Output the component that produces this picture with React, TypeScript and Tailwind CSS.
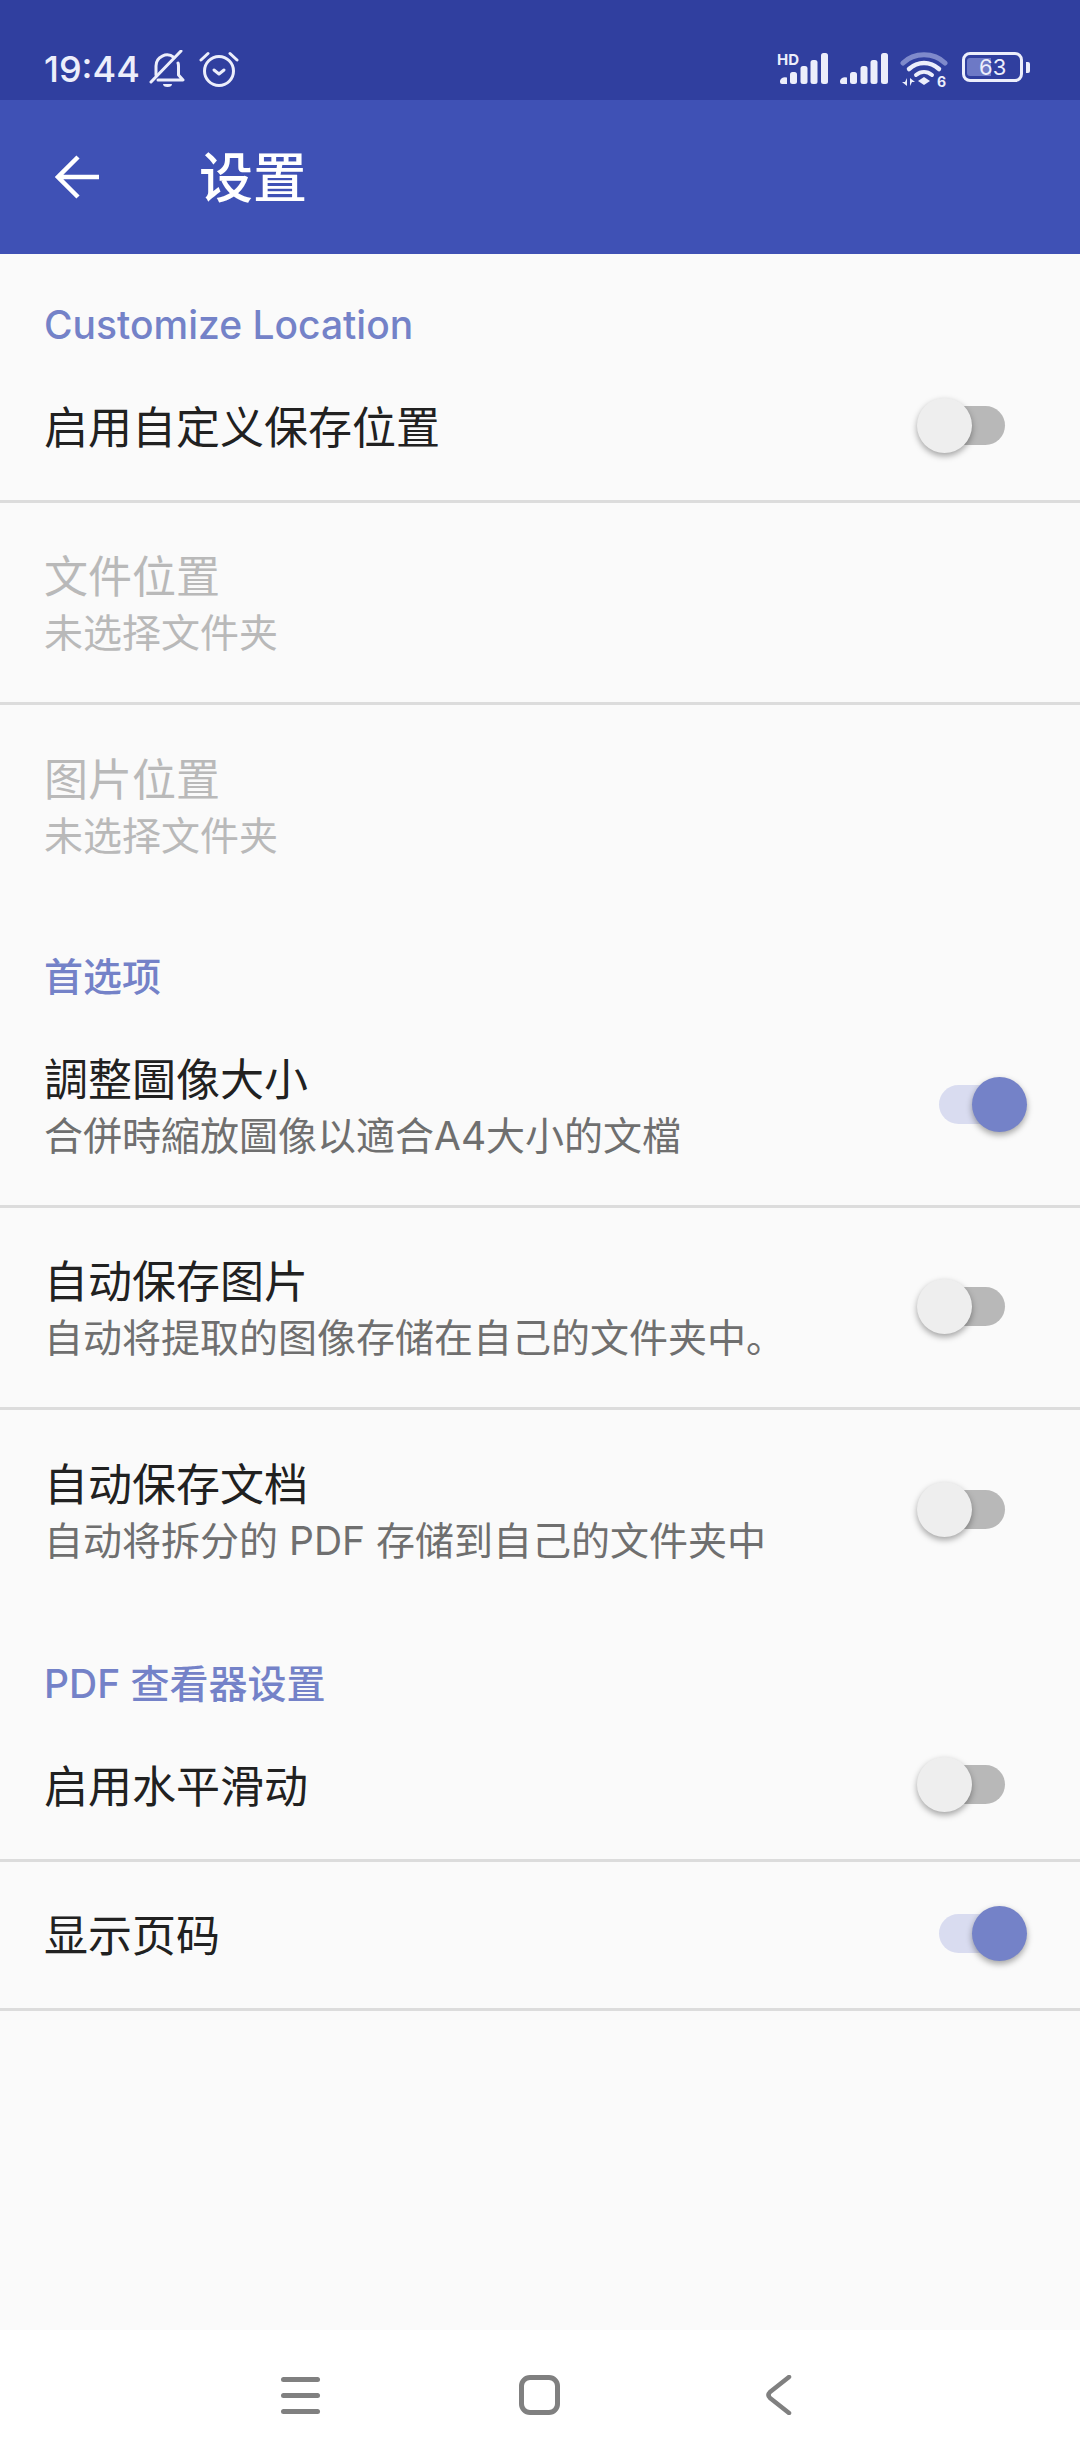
const font = "font-['Inter','Noto_Sans_CJK_SC',sans-serif]";

function Signal({ hd }: { hd?: boolean }) {
  return (
    <svg width="52" height="35" viewBox="-4 -4 52 35" className="-ml-[4px] -mt-[4px] block">
      {hd && (
        <text x="-3" y="12" fontSize="15" fontWeight="700" fill="#eceefb" fontFamily="Inter">
          HD
        </text>
      )}
      <g fill="#eceefb">
        <path d="M0 29v-1.500a6 6 0 0 1 7-3V31H2a2 2 0 0 1-2-2z" />
        <rect x="10" y="19" width="7" height="12" rx="2.500" />
        <rect x="20.500" y="13" width="7" height="18" rx="2.500" />
        <rect x="30.500" y="7" width="7" height="24" rx="2.500" />
        <rect x="41" y="0" width="7" height="31" rx="2.500" />
      </g>
    </svg>
  );
}

function StatusBar() {
  return (
    <div className="flex h-[100px] items-start justify-between bg-[#303f9f] pl-[44px] pr-[50px] pt-[50px] text-[#eceefb]">
      <div className="flex items-center">
        <span className="text-[36px] font-medium leading-[36px]">19:44</span>
        <svg width="36" height="38" viewBox="0 0 36 38" fill="none" stroke="#eceefb" strokeWidth="3" className="ml-[9px]">
          <path d="M7 25V16a11 11 0 0 1 18-8.500" strokeLinecap="round" />
          <path d="M29 13c.5 1 .5 2 .5 3v9l4.500 5H9" strokeLinecap="round" strokeLinejoin="round" />
          <path d="M2 32 32 1" strokeLinecap="round" />
          <path d="M14 34h9a4.500 3 0 0 1-9 0z" fill="#eceefb" stroke="none" />
        </svg>
        <svg width="40" height="38" viewBox="0 0 40 38" fill="none" stroke="#eceefb" strokeWidth="3" strokeLinecap="round" strokeLinejoin="round" className="ml-[14px]">
          <circle cx="20" cy="21" r="14.500" />
          <path d="M2 10 9 3.500M38 10 31 3.500" />
          <path d="M15 20l5 4 5-4" />
        </svg>
      </div>
      <div className="flex items-start pt-[2px]">
        <div className="mt-[1px]">
          <Signal hd />
        </div>
        <div className="ml-[12px] mt-[1px]">
          <Signal />
        </div>
        <svg width="48" height="38" viewBox="0 0 48 38" fill="none" strokeLinecap="round" className="ml-[12px]">
          <path d="M3 11C14 0 34 0 45 11" stroke="#7f8acb" strokeWidth="5" />
          <path d="M9 17c9-8 21-8 30 0" stroke="#eceefb" strokeWidth="4.500" />
          <path d="M16 23c5-4 11-4 16 0" stroke="#eceefb" strokeWidth="4" />
          <path d="M18 29l6-4 6 4-6 4z" fill="#eceefb" />
          <path d="M7 26v8l-5-4h3zM10 34v-8l5 4h-3z" fill="#eceefb" />
          <text x="37" y="35" fontSize="14" fontWeight="700" fill="#eceefb" fontFamily="Inter">
            6
          </text>
        </svg>
        <div className="ml-[14px] flex items-center">
          <div className="flex h-[30px] w-[61px] items-stretch rounded-[8px] border-[3px] border-[#eceefb] px-[2px] py-[3px]">
            <div className="relative w-[24px] rounded-l-[3px] bg-[#6d79c6]">
              <span className="absolute left-[12px] top-[-3px] text-[22px] leading-[24px] text-[#eceefb]">63</span>
            </div>
          </div>
          <div className="ml-[3px] h-[11px] w-[4px] rounded-r-[2px] bg-[#eceefb]"></div>
        </div>
      </div>
    </div>
  );
}

function AppBar() {
  return (
    <div className="flex h-[154px] items-center bg-[#3f51b5] pl-[55px]">
      <svg width="44" height="44" viewBox="0 0 44 44" fill="none" stroke="#fff" strokeWidth="4.500" className="block">
        <path d="M44 22H3M23 2 3 22l20 20" />
      </svg>
      <div className="ml-[100px] mt-[4px] text-[54px] font-medium leading-none text-white">设置</div>
    </div>
  );
}

function Switch({ on }: { on?: boolean }) {
  if (on) {
    return (
      <div className="relative mb-[3px] mr-[61px] h-[39px] w-[80px] shrink-0 rounded-full bg-[#d9dcf0]">
        <div className="absolute -right-2 -top-2 h-[55px] w-[55px] rounded-full bg-[#7482c8] shadow-[0_3px_6px_rgba(0,0,0,0.35)]"></div>
      </div>
    );
  }
  return (
    <div className="relative mb-[3px] mr-[75px] h-[39px] w-[80px] shrink-0 rounded-full bg-[#b8b8b8]">
      <div className="absolute -left-2 -top-2 h-[55px] w-[55px] rounded-full bg-[#eeeeee] shadow-[0_3px_6px_rgba(0,0,0,0.35)]"></div>
    </div>
  );
}

function SectionTitle({ children, h }: { children: string; h: string }) {
  return <div className={`flex items-end pb-[3px] pl-[44px] text-[39px] font-medium leading-[52px] text-[#7482c8] ${h}`}>{children}</div>;
}

function Row({
  title,
  sub,
  on,
  disabled,
  noSwitch,
  divider,
}: {
  title: string;
  sub?: string;
  on?: boolean;
  disabled?: boolean;
  noSwitch?: boolean;
  divider?: boolean;
}) {
  return (
    <div className={`flex items-center justify-between pl-[44px] ${sub ? "h-[202px]" : "h-[149px]"} ${divider ? "border-b-[3px] border-[#dcdcdc]" : ""}`}>
      <div className="min-w-0 pt-[3px]">
        <div className={`text-[44px] leading-[57px] ${disabled ? "text-[#b9b9b9]" : "text-[#212121]"}`}>{title}</div>
        {sub && <div className={`text-[39px] leading-[54px] ${disabled ? "text-[#b9b9b9]" : "text-[#6f6f6f]"}`}>{sub}</div>}
      </div>
      {!noSwitch && <Switch on={on} />}
    </div>
  );
}

function NavBar() {
  return (
    <div className="flex h-[130px] items-start bg-white pt-[45px]">
      <div className="ml-[281px] flex h-[40px] w-[39px] flex-col justify-center gap-[11px]">
        <div className="h-[5px] rounded-full bg-[#808080]"></div>
        <div className="h-[5px] rounded-full bg-[#808080]"></div>
        <div className="h-[5px] rounded-full bg-[#808080]"></div>
      </div>
      <div className="ml-[199px] h-[40px] w-[41px] rounded-[11px] border-[5px] border-[#808080]"></div>
      <svg width="26" height="40" viewBox="0 0 26 40" fill="none" stroke="#808080" strokeWidth="4.500" strokeLinecap="round" strokeLinejoin="round" className="ml-[206px]">
        <path d="M23 2 4 17q-3 3 0 6L23 38" />
      </svg>
    </div>
  );
}

export default function App() {
  return (
    <div className={`flex h-[2460px] w-[1080px] flex-col overflow-hidden bg-[#fafafa] ${font}`}>
      <StatusBar />
      <AppBar />
      <div className="flex-1">
        <SectionTitle h="h-[100px]">Customize Location</SectionTitle>
        <Row title="启用自定义保存位置" divider />
        <Row title="文件位置" sub="未选择文件夹" disabled noSwitch divider />
        <Row title="图片位置" sub="未选择文件夹" disabled noSwitch />
        <SectionTitle h="h-[99px]">首选项</SectionTitle>
        <Row title="調整圖像大小" sub="合併時縮放圖像以適合A4大小的文檔" on divider />
        <Row title="自动保存图片" sub="自动将提取的图像存储在自己的文件夹中。" divider />
        <Row title="自动保存文档" sub="自动将拆分的 PDF 存储到自己的文件夹中" />
        <SectionTitle h="h-[101px]">PDF 查看器设置</SectionTitle>
        <Row title="启用水平滑动" divider />
        <Row title="显示页码" on divider />
      </div>
      <NavBar />
    </div>
  );
}
